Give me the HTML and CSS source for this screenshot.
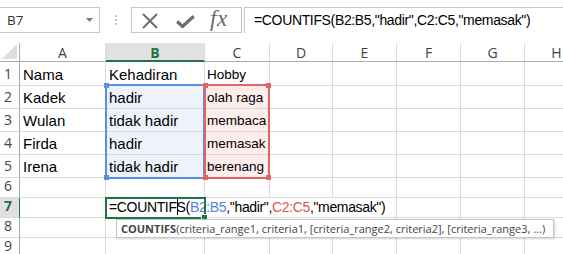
FILE: index.html
```html
<!DOCTYPE html>
<html>
<head>
<meta charset="utf-8">
<link rel="stylesheet" href="styles.css">
</head>
<body>
<div class="app">
  <div class="toolbar">
    <div class="namebox"><span>B7</span><svg class="caret" width="7" height="4" viewBox="0 0 7 4"><path d="M0 0H7L3.5 4Z" fill="#7a7a7a"/></svg></div>
    <div class="sep"><i></i><i></i><i></i></div>
    <div class="fxbox">
      <svg class="ico-x" width="16" height="16" viewBox="0 0 16 16"><path d="M1 1L15 15M15 1L1 15" stroke="#6e6e6e" stroke-width="2"/></svg>
      <svg class="ico-ok" width="19" height="13" viewBox="0 0 19 13"><path d="M1.2 6.5L6.5 11.5L17.8 1.2" fill="none" stroke="#6e6e6e" stroke-width="3.2"/></svg>
      <span class="fx">fx</span>
    </div>
    <div class="formula">=COUNTIFS(B2:B5,"hadir",C2:C5,"memasak")</div>
  </div>

  <div class="sheet">
    <div class="corner"><svg width="15" height="15" viewBox="0 0 15 15"><path d="M15 0V15H0Z" fill="#dedede"/></svg></div>
    <div class="ch">A</div><div class="ch sel">B</div><div class="ch">C</div><div class="ch">D</div><div class="ch">E</div><div class="ch">F</div><div class="ch">G</div><div class="ch">H</div>

    <div class="rh">1</div><div class="c">Nama</div><div class="c">Kehadiran</div><div class="c sm">Hobby</div><div class="c"></div><div class="c"></div><div class="c"></div><div class="c"></div><div class="c"></div>
    <div class="rh">2</div><div class="c">Kadek</div><div class="c bf">hadir</div><div class="c sm rf">olah raga</div><div class="c"></div><div class="c"></div><div class="c"></div><div class="c"></div><div class="c"></div>
    <div class="rh">3</div><div class="c">Wulan</div><div class="c bf">tidak hadir</div><div class="c sm rf">membaca</div><div class="c"></div><div class="c"></div><div class="c"></div><div class="c"></div><div class="c"></div>
    <div class="rh">4</div><div class="c">Firda</div><div class="c bf">hadir</div><div class="c sm rf">memasak</div><div class="c"></div><div class="c"></div><div class="c"></div><div class="c"></div><div class="c"></div>
    <div class="rh">5</div><div class="c">Irena</div><div class="c bf">tidak hadir</div><div class="c sm rf">berenang</div><div class="c"></div><div class="c"></div><div class="c"></div><div class="c"></div><div class="c"></div>
    <div class="rh">6</div><div class="c"></div><div class="c"></div><div class="c"></div><div class="c"></div><div class="c"></div><div class="c"></div><div class="c"></div><div class="c"></div>
    <div class="rh sel">7</div><div class="c"></div><div class="c edit"><span class="txt">=COUNTIF<span class="cur"></span>S(<span class="rb">B2:B5</span>,"hadir",<span class="rr">C2:C5</span>,"memasak")</span></div><div class="c nr"></div><div class="c nr"></div><div class="c"></div><div class="c"></div><div class="c"></div><div class="c"></div>
    <div class="rh">8</div><div class="c"></div><div class="c"></div><div class="c"></div><div class="c"></div><div class="c"></div><div class="c"></div><div class="c"></div><div class="c"></div>
    <div class="rh">9</div><div class="c"></div><div class="c"></div><div class="c"></div><div class="c"></div><div class="c"></div><div class="c"></div><div class="c"></div><div class="c"></div>

    <div class="range blue"><i class="h tl"></i><i class="h bl"></i></div>
    <div class="range red"><i class="h tl"></i><i class="h tr"></i><i class="h bl"></i><i class="h br"></i></div>
    <div class="active"><i class="fill"></i></div>
    <div class="tip"><b>COUNTIFS</b>(criteria_range1, criteria1, [criteria_range2, criteria2], [criteria_range3, ...)</div>
  </div>
</div>
</body>
</html>
```

FILE: styles.css
```css
html, body { margin: 0; padding: 0; background: #fff; }
body { font-family: "Liberation Sans", Arial, sans-serif; }
.app { width: 563px; height: 254px; overflow: hidden; position: relative; background: #fff; }

.toolbar { display: flex; align-items: flex-start; height: 43px; padding-top: 7px; box-sizing: border-box; }
.namebox {
  margin-left: -1px; width: 101px; height: 26px; box-sizing: border-box;
  border: 1px solid #c6c6c6; display: flex; align-items: center; justify-content: space-between;
  padding: 0 6px 0 7px; font-family: "Open Sans", sans-serif; font-size: 13.5px; color: #333;
}
.sep { margin-left: 15px; width: 2px; display: flex; flex-direction: column; gap: 2px; padding-top: 8px; }
.sep i { display: block; width: 2px; height: 2px; background: #c4c4c4; }
.fxbox {
  margin-left: 14px; width: 111px; height: 26px; box-sizing: border-box;
  border: 1px solid #c6c6c6; display: flex; align-items: center; padding-left: 10px;
}
.ico-x { margin-top: 1px; }
.ico-ok { margin-left: 18px; margin-top: 3px; }
.fx { margin-left: 15px; font-family: "Liberation Serif", serif; font-style: italic; font-size: 23px; color: #6a6a6a; line-height: 22px; margin-top: -2px; letter-spacing: 0.5px; }
.formula {
  margin-left: 2px; flex: 1; height: 26px; box-sizing: border-box;
  border-top: 1px solid #c6c6c6; border-left: 1px solid #c6c6c6;
  padding-left: 9px; font-size: 14px; letter-spacing: -0.35px; line-height: 25px; color: #000; white-space: nowrap;
}

.sheet {
  position: relative; display: grid;
  grid-template-columns: 20px 86px 99px 65px 63px 64px 64px 64px 64px;
  grid-template-rows: 19px 24px 23px 23px 23px 23px 20px 20px 20px 20px;
}
.sheet > div { box-sizing: border-box; }
.corner { border-right: 1px solid #ababab; border-bottom: 1px solid #ababab; display: flex; align-items: flex-end; justify-content: flex-end; padding: 0 2px 2px 0; }
.corner svg { display: block; }
.ch {
  border-right: 1px solid #dadada; border-bottom: 1px solid #ababab;
  display: flex; align-items: center; justify-content: center;
  font-family: "Open Sans", sans-serif; font-size: 14px; color: #444; padding-top: 1px;
}
.ch.sel { background: #e1e1e1; color: #217346; font-weight: bold; border-bottom: 2px solid #217346; }
.rh {
  border-right: 1px solid #ababab; border-bottom: 1px solid #dadada;
  display: flex; align-items: flex-end; padding: 0 0 2px 4px;
  font-family: "Open Sans", sans-serif; font-size: 14px; color: #444; line-height: 18px;
}
.rh.sel { background: #e1e1e1; color: #217346; font-weight: bold; border-right: 1px solid #217346; }
.c {
  border-right: 1px solid #dadada; border-bottom: 1px solid #dadada;
  display: flex; align-items: flex-end; padding: 0 0 2px 3px;
  font-size: 15px; line-height: 17px; color: #000; white-space: nowrap;
}
.c.sm { font-size: 13.5px; padding-left: 2px; }
.c.nr { border-right-color: transparent; }
.bf { background: #edf2fc; }
.rf { background: #fdeded; }
.edit { position: relative; z-index: 2; overflow: visible; font-size: 14px; letter-spacing: -0.35px; padding-left: 3px; padding-bottom: 1px; }
.txt { white-space: nowrap; }
.cur { display: inline-block; width: 1px; height: 16px; background: #000; margin-right: -1px; vertical-align: -3px; }
.rb { color: #4f86e6; }
.rr { color: #e05555; }

.range { position: absolute; box-sizing: border-box; border: 2px solid; z-index: 3; }
.range.blue { left: 105px; top: 41px; width: 100px; height: 95px; border-color: #5b8ee6; }
.range.red { left: 204px; top: 41px; width: 66px; height: 95px; border-color: #e06666; }
.h { position: absolute; width: 5px; height: 5px; display: block; }
.blue .h { background: #5b8ee6; }
.red .h { background: #e06666; }
.h.tl { left: -3px; top: -3px; }
.h.tr { right: -3px; top: -3px; }
.h.bl { left: -3px; bottom: -3px; }
.h.br { right: -3px; bottom: -3px; }

.active { position: absolute; left: 105px; top: 154px; width: 101px; height: 22px; box-sizing: border-box; border: 2px solid #217346; z-index: 4; }
.active .fill { position: absolute; right: -4px; bottom: -4px; width: 5px; height: 5px; background: #217346; border: 1px solid #fff; display: block; }

.tip {
  position: absolute; left: 116px; top: 176px; width: 438px; height: 19px; box-sizing: border-box;
  background: #fff; border: 1px solid #c4c4c4; box-shadow: 1px 1px 2px rgba(0,0,0,0.18);
  font-family: "Open Sans", sans-serif; font-size: 11px; color: #444; line-height: 17px;
  padding-left: 4px; white-space: nowrap; z-index: 6;
}
.tip b { font-weight: bold; }
```
